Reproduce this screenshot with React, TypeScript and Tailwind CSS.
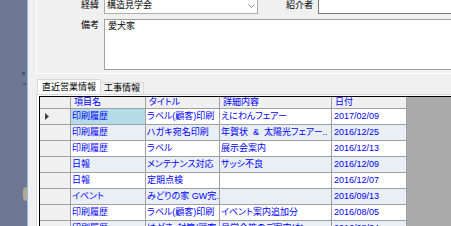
import React from 'react';

type Row = { kind: string; title: string; detail: string; date: string };

const rows: Row[] = [
  { kind: '印刷履歴', title: 'ラベル(顧客)印刷', detail: 'えにわんフェアー', date: '2017/02/09' },
  { kind: '印刷履歴', title: 'ハガキ宛名印刷', detail: '年賀状  &  太陽光フェアー..', date: '2016/12/25' },
  { kind: '印刷履歴', title: 'ラベル', detail: '展示会案内', date: '2016/12/13' },
  { kind: '日報', title: 'メンテナンス対応', detail: 'サッシ不良', date: '2016/12/09' },
  { kind: '日報', title: '定期点検', detail: '', date: '2016/12/07' },
  { kind: 'イベント', title: 'みどりの家 GW完..', detail: '', date: '2016/09/13' },
  { kind: '印刷履歴', title: 'ラベル(顧客)印刷', detail: 'イベント案内追加分', date: '2016/08/05' },
  { kind: '印刷履歴', title: 'はがき・封筒(顧客', detail: '見学会等のご案内(お', date: '2016/08/04' },
];

function Chevron(): React.ReactElement {
  return (
    <svg width="7" height="4" viewBox="0 0 7 4" className="text-[#7a7a7a]">
      <path d="M0.5 0.5 L3.5 3.5 L6.5 0.5" fill="none" stroke="currentColor" strokeWidth="1" />
    </svg>
  );
}

function RowMarker(): React.ReactElement {
  return (
    <svg width="4" height="7" viewBox="0 0 4 7">
      <path d="M0 0 L4 3.5 L0 7 Z" fill="#404040" />
    </svg>
  );
}

export default function App(): React.ReactElement {
  return (
    <div className="flex h-[226px] w-[451px] overflow-hidden font-['Liberation_Sans','Noto_Sans_CJK_JP',sans-serif] text-[9px] leading-none [font-feature-settings:'palt']">
      {/* Desktop wallpaper */}
      <div className="flex w-[27px] shrink-0 flex-col bg-[#6f7893]">
        <div className="h-[72px]" />
        <div className="ml-[22px] h-[3px] w-[3px] bg-[#4e566a]" />
        <div className="h-[8px]" />
        <div className="ml-[23px] h-[2px] w-[3px] bg-[#535b70]" />
        <div className="h-[102px]" />
        <div className="ml-[23px] h-[14px] w-[4px] rounded-l-full bg-[#b3a892]" />
      </div>
      <div className="w-px shrink-0 bg-[#8fbbe6]" />

      {/* Window */}
      <div className="flex min-w-0 flex-1 flex-col bg-[#f0f0f0] pl-[8px]">
        {/* Form group */}
        <div className="-mt-[6px] border-b border-l border-white pb-[3px]">
          <div className="flex h-[20px] items-end">
            <div className="flex h-full w-[62px] items-center justify-end pt-[2px]">経緯</div>
            <div className="ml-[5px] flex h-full w-[154px] items-center border border-[#adadad] bg-white pl-[2px] pt-[2px]">
              <span className="flex-1">構造見学会</span>
              <span className="mr-[2px] pt-[2px]">
                <Chevron />
              </span>
            </div>
            <div className="flex h-full w-[60px] items-center justify-end pr-[5px] pt-[2px]">紹介者</div>
            <div className="h-full flex-1 border-b border-l border-[#7a7a7a] bg-white" />
          </div>
          <div className="mt-[5px] flex h-[51px]">
            <div className="flex w-[62px] justify-end pt-[2px]">備考</div>
            <div className="ml-[5px] flex-1 border-b border-l border-t border-[#a0a0a0] bg-white pl-[3px] pt-[2px]">
              愛犬家
            </div>
          </div>
        </div>

        {/* Tabs */}
        <div className="mt-[5px] flex h-[15px] items-end pl-[1px]">
          <div className="flex h-[15px] w-[64px] items-center justify-center whitespace-nowrap border border-b-0 border-[#d9d9d9] bg-white text-[9px] text-black">
            直近営業情報
          </div>
          <div className="flex h-[12px] w-[43px] items-center justify-center whitespace-nowrap border border-b-0 border-l-0 border-[#d9d9d9] bg-[#f0f0f0] text-[9px] text-black">
            工事情報
          </div>
        </div>

        {/* Tab page */}
        <div className="flex min-h-0 flex-1 flex-col border-l border-t border-[#d9d9d9] bg-white pl-[2px] pt-[1px]">
          <div className="flex min-h-0 flex-1 flex-col border-l border-t border-black bg-[#ababab] text-[#0000ff]">
            {/* Header */}
            <div className="flex h-[12px] shrink-0">
              <div className="h-full w-[31px] border-b border-r border-[#a0a0a0] bg-[#f0f0f0]" />
              <div className="flex h-full w-[75px] items-center border-b border-r border-[#a0a0a0] bg-[#f0f0f0] pl-[3px]">項目名</div>
              <div className="flex h-full w-[74px] items-center border-b border-r border-[#a0a0a0] bg-[#f0f0f0] pl-[3px]">タイトル</div>
              <div className="flex h-full w-[112px] items-center border-b border-r border-[#a0a0a0] bg-[#f0f0f0] pl-[3px]">詳細内容</div>
              <div className="flex h-full w-[75px] items-center border-b border-r border-[#a0a0a0] bg-[#f0f0f0] pl-[3px]">日付</div>
            </div>

            {/* Rows */}
            {rows.map((row, i) => {
              const bg = i % 2 === 1 ? 'bg-[#eaeff6]' : 'bg-white';
              return (
                <div key={i} className="flex h-[16px] shrink-0">
                  <div className="flex h-full w-[31px] items-center border-b border-r border-[#a0a0a0] bg-[#f0f0f0] pl-[5px]">
                    {i === 0 && <RowMarker />}
                  </div>
                  <div
                    className={`flex h-full w-[75px] items-center overflow-hidden whitespace-nowrap border-b border-r border-[#a0a0a0] pl-[1px] ${
                      i === 0 ? 'bg-[#b4dbe8]' : bg
                    }`}
                  >
                    {row.kind}
                  </div>
                  <div className={`flex h-full w-[74px] items-center overflow-hidden whitespace-pre border-b border-r border-[#a0a0a0] pl-[1px] ${bg}`}>
                    {row.title}
                  </div>
                  <div className={`flex h-full w-[112px] items-center overflow-hidden whitespace-pre border-b border-r border-[#a0a0a0] pl-[1px] ${bg}`}>
                    {row.detail}
                  </div>
                  <div className={`flex h-full w-[75px] items-center overflow-hidden whitespace-nowrap border-b border-r border-[#a0a0a0] pl-[2px] ${bg}`}>
                    {row.date}
                  </div>
                </div>
              );
            })}
          </div>
        </div>
      </div>
    </div>
  );
}
